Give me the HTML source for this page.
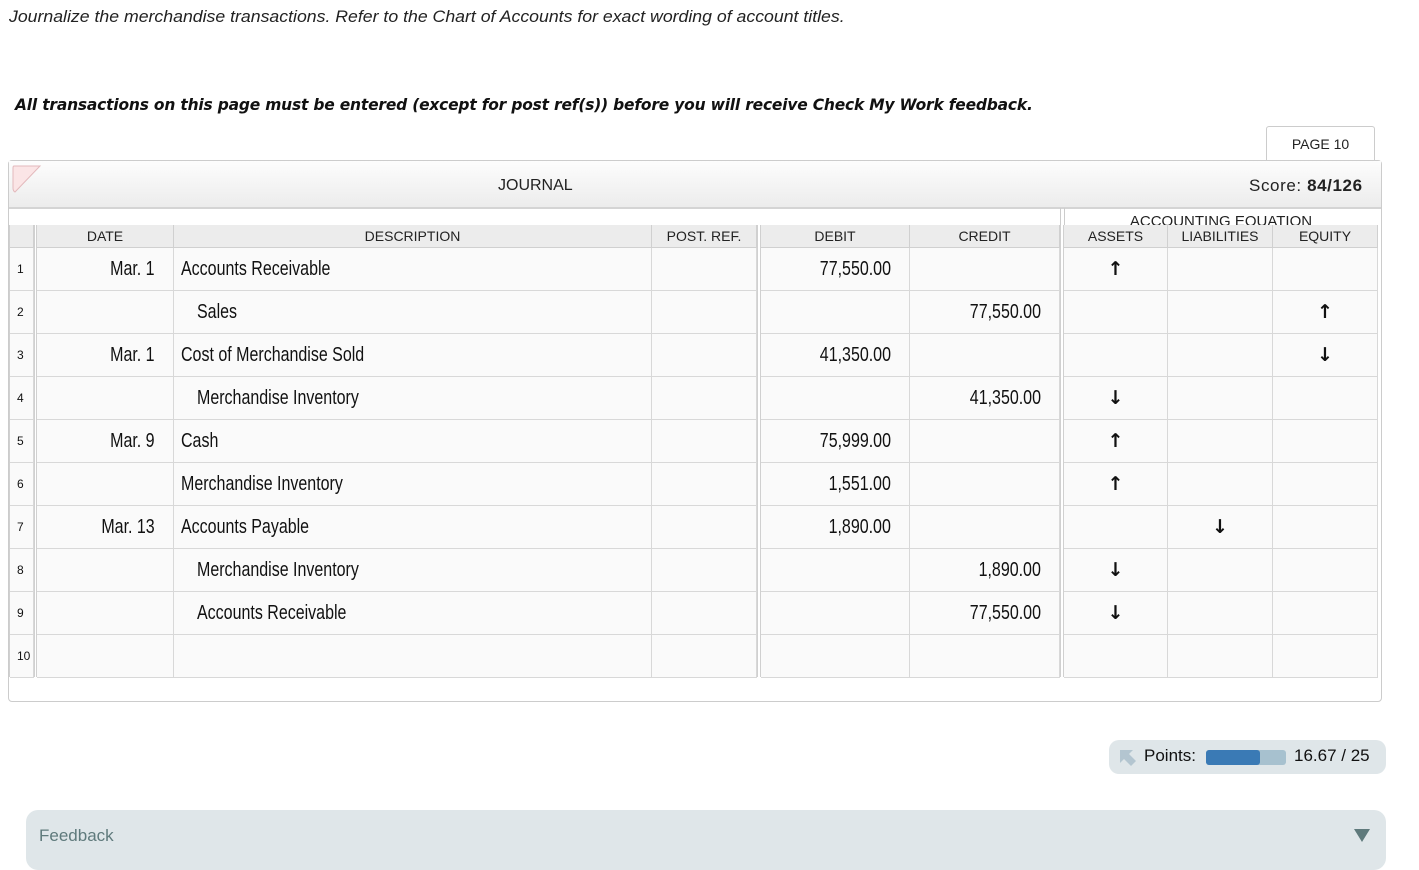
<!DOCTYPE html>
<html><head><meta charset="utf-8"><style>
body{margin:0;width:1419px;height:856px;position:relative;background:#fff;font-family:"Liberation Sans",sans-serif;overflow:hidden}
.a{position:absolute}
.c{position:absolute;box-sizing:border-box;border-right:1px solid #d8d8d8;border-bottom:1px solid #d8d8d8;font-size:20px;color:#111;display:flex;align-items:center}
.c span{display:inline-block;transform:scaleX(0.8)}
.r span{transform-origin:right}
.l span{transform-origin:left}
.h{position:absolute;box-sizing:border-box;background:#ececec;border-right:1px solid #d0d0d0;border-bottom:1px solid #d0d0d0;font-size:14px;color:#222;text-align:center;line-height:23px}
.r{justify-content:flex-end;padding-right:18px}
.ar{justify-content:center;font-family:"DejaVu Sans",sans-serif;font-size:19px;font-weight:bold}
.n{font-size:12px;padding-left:7px}
</style></head><body>
<div class="a" style="left:9px;top:7px;font-size:17px;font-style:italic;color:#222;transform:scaleX(1.04);transform-origin:left">Journalize the merchandise transactions. Refer to the Chart of Accounts for exact wording of account titles.</div>
<div class="a" style="left:15px;top:95px;font-size:16px;font-style:italic;font-weight:bold;color:#111;font-family:'DejaVu Sans',sans-serif;letter-spacing:-0.2px;transform:scaleX(0.967);transform-origin:left">All transactions on this page must be entered (except for post ref(s)) before you will receive Check My Work feedback.</div>
<div class="a" style="left:1266px;top:126px;width:107px;height:36px;border:1px solid #ccc;border-bottom:none;border-radius:3px 3px 0 0;background:#fff;font-size:14px;text-align:center;line-height:34px;color:#222">PAGE 10</div>
<div class="a" style="left:8px;top:160px;width:1372px;height:540px;border:1px solid #ccc;border-radius:4px;background:#fff"></div>
<div class="a" style="left:9px;top:161px;width:1372px;height:46px;background:linear-gradient(#fdfdfd,#ececec);border-bottom:2px solid #d4d4d4"></div>
<svg class="a" style="left:11px;top:164px" width="32" height="30"><path d="M3 2 H29 L4 28 Q2 27 2 24 V4 Q2 2 3 2Z" fill="#fbe5e6" stroke="#e3b9bc"/></svg>
<div class="a" style="left:498px;top:177px;font-size:16px;color:#222">JOURNAL</div>
<div class="a" style="left:1249px;top:176px;font-size:17px;color:#222;letter-spacing:0.6px">Score: <b>84/126</b></div>
<div class="a" style="left:1060px;top:208px;width:3px;height:17px;border-left:1px solid #ccc;border-right:1px solid #ccc"></div>
<div class="a" style="left:1064px;top:210px;width:314px;height:15px;overflow:hidden;text-align:center;font-size:15px;line-height:24px;color:#222">ACCOUNTING EQUATION</div>
<div id="t"></div>
<script>
var cols=[[10,24],[37,137],[174,478],[652,105],[761,149],[910,150],[1064,104],[1168,105],[1273,105]];
var hd=["","DATE","DESCRIPTION","POST. REF.","DEBIT","CREDIT","ASSETS","LIABILITIES","EQUITY"];
var U="↑",D="↓";
var rows=[["Mar. 1","Accounts Receivable",0,"77,550.00","",U,"",""],
["","Sales",1,"","77,550.00","","",U],
["Mar. 1","Cost of Merchandise Sold",0,"41,350.00","","","",D],
["","Merchandise Inventory",1,"","41,350.00",D,"",""],
["Mar. 9","Cash",0,"75,999.00","",U,"",""],
["","Merchandise Inventory",0,"1,551.00","",U,"",""],
["Mar. 13","Accounts Payable",0,"1,890.00","","",D,""],
["","Merchandise Inventory",1,"","1,890.00",D,"",""],
["","Accounts Receivable",1,"","77,550.00",D,"",""],
["","",0,"","","","",""]];
var h="";
cols.forEach(function(c,i){h+='<div class="h" style="left:'+c[0]+'px;top:225px;width:'+c[1]+'px;height:23px">'+hd[i]+'</div>';});
[[34,3],[757,4],[1060,4]].forEach(function(s){h+='<div class="a" style="left:'+s[0]+'px;top:225px;width:'+(s[1]-2)+'px;height:452px;border-left:1px solid #d0d0d0;border-right:1px solid #d0d0d0;background:#fff"></div>';});
rows.forEach(function(r,i){var y=248+i*43;
 var v=[String(i+1),r[0],r[1],"",r[3],r[4],r[5],r[6],r[7]];
 cols.forEach(function(c,j){var cls="c",st="",t=v[j];
  if(j==0)cls+=" n";else if(j==1||j==4||j==5){cls+=" r";t='<span>'+t+'</span>';}else if(j>=6)cls+=" ar";else if(j==2){cls+=" l";t='<span>'+t+'</span>';}
  if(j==2)st="padding-left:"+(r[2]?23:7)+"px;";
  h+='<div class="'+cls+'" style="left:'+c[0]+'px;top:'+y+'px;width:'+c[1]+'px;height:43px;background:#fafafa;'+st+'">'+t+'</div>';});
});
document.getElementById("t").innerHTML=h;
</script>
<div class="a" style="left:9px;top:225px;width:1px;height:452px;background:#d0d0d0"></div>
<div class="a" style="left:1109px;top:740px;width:277px;height:34px;background:#dfe6e9;border-radius:10px"></div>
<svg class="a" style="left:1119px;top:749px" width="18" height="18"><path d="M1 1H14L10 5L17 12L12 17L5 10L1 14Z" fill="#b3c5d0"/></svg>
<div class="a" style="left:1144px;top:746px;font-size:17px;color:#111">Points:</div>
<div class="a" style="left:1206px;top:750px;width:80px;height:15px;background:#a7c1cf;border-radius:3px"></div>
<div class="a" style="left:1206px;top:750px;width:54px;height:15px;background:#3a7ab5;border-radius:3px"></div>
<div class="a" style="left:1294px;top:746px;font-size:17px;color:#111">16.67 / 25</div>
<div class="a" style="left:26px;top:810px;width:1360px;height:60px;background:#dfe6e9;border-radius:12px"></div>
<div class="a" style="left:39px;top:826px;font-size:17px;color:#5f7a7c">Feedback</div>
<svg class="a" style="left:1354px;top:829px" width="16" height="13"><path d="M0 0H16L8 13Z" fill="#5f7a7c"/></svg>
</body></html>
